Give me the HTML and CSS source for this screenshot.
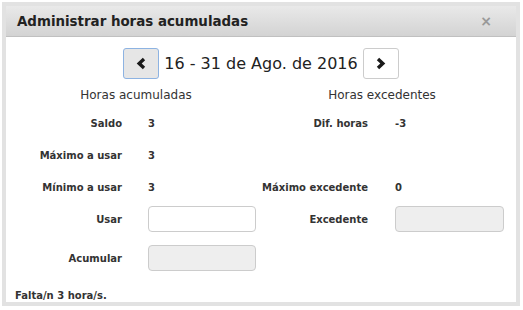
FILE: index.html
```html
<!DOCTYPE html>
<html>
<head>
	<title>Administrar horas acumuladas</title>
	<link rel="stylesheet" href="styles.css">
</head>
<body>
	<div class="modal">
		<div class="modal-header">
			<h3>Administrar horas acumuladas</h3>
			<span class="close">&times;</span>
		</div>

		<div class="modal-body">
			<div class="periodo">
				<button type="button" class="btn btn-active">
					<svg width="11" height="13" viewBox="0 0 11 13"><path d="M8 2 L3.2 6.5 L8 11" fill="none" stroke="#1a1a1a" stroke-width="3.4"/></svg>
				</button>
				<span class="fecha">16 - 31 de Ago. de 2016</span>
				<button type="button" class="btn">
					<svg width="11" height="13" viewBox="0 0 11 13"><path d="M3 2 L7.8 6.5 L3 11" fill="none" stroke="#1a1a1a" stroke-width="3.4"/></svg>
				</button>
			</div>

			<div class="titulos">
				<h4>Horas acumuladas</h4>
				<h4>Horas excedentes</h4>
			</div>

			<div class="fila">
				<label>Saldo</label>
				<span class="valor">3</span>
				<label>Dif. horas</label>
				<span class="valor valor-der">-3</span>
			</div>
			<div class="fila">
				<label>Máximo a usar</label>
				<span class="valor">3</span>
				<span></span>
				<span></span>
			</div>
			<div class="fila">
				<label>Mínimo a usar</label>
				<span class="valor">3</span>
				<label>Máximo excedente</label>
				<span class="valor valor-der">0</span>
			</div>
			<div class="fila fila-input">
				<label for="usar">Usar</label>
				<span class="valor"><input type="text" id="usar" class="campo"></span>
				<label for="excedente">Excedente</label>
				<span class="valor valor-der"><input type="text" id="excedente" class="campo campo-der" disabled></span>
			</div>
			<div class="fila fila-input fila-ultima">
				<label for="acumular">Acumular</label>
				<span class="valor"><input type="text" id="acumular" class="campo" disabled></span>
				<span></span>
				<span></span>
			</div>

			<p class="aviso">Falta/n 3 hora/s.</p>
		</div>
	</div>
</body>
</html>
```

FILE: styles.css
```css
body {
	font-family: "DejaVu Sans", Verdana, sans-serif;
	color: #333;
	margin: 0;
	padding: 2px;
	background: #fff;
}

.modal {
	width: 510px;
	height: 296px;
	border: 4px solid #e2e2e2;
	background: #fff;
	overflow: hidden;
}

.modal-header {
	height: 30px;
	display: flex;
	align-items: center;
	justify-content: space-between;
	padding: 0 24px 0 11px;
	background: linear-gradient(#e9e9e9, #d3d3d3);
	border-bottom: 1px solid #c0c0c0;
}

.modal-header h3 {
	margin: 0;
	font-size: 13.4px;
	font-weight: bold;
	color: #222;
}

.close {
	font-size: 14px;
	font-weight: bold;
	color: #999;
}

.periodo {
	display: flex;
	justify-content: center;
	align-items: center;
	gap: 5px;
	margin-top: 11px;
}

.btn {
	width: 36px;
	height: 31px;
	padding: 0;
	display: flex;
	align-items: center;
	justify-content: center;
	background: #fff;
	border: 1px solid #ccc;
	border-radius: 3px;
}

.btn-active {
	background: #e6e6e6;
	border-color: #8db3e2;
}

.fecha {
	font-size: 16px;
	color: #222;
}

.titulos {
	display: grid;
	grid-template-columns: 260px 232px;
	margin-top: 6px;
}

.titulos h4 {
	margin: 0;
	text-align: center;
	font-size: 12px;
	font-weight: normal;
	line-height: 20px;
}

.fila {
	display: grid;
	grid-template-columns: 116px 134px 112px 148px;
	height: 32px;
	align-items: center;
	font-size: 10px;
	font-weight: bold;
}

.titulos + .fila {
	margin-top: 2px;
}

.fila label {
	text-align: right;
	white-space: nowrap;
}

.valor {
	padding-left: 26px;
}

.valor-der {
	padding-left: 27px;
}

.fila-input {
	height: 26px;
	margin-top: 3px;
}

.fila-ultima {
	margin-top: 13px;
}

.campo {
	display: block;
	box-sizing: border-box;
	width: 108px;
	height: 26px;
	border: 1px solid #ccc;
	border-radius: 4px;
	background: #fff;
}

.campo:disabled {
	background: #eee;
}

.campo-der {
	width: 109px;
}

.aviso {
	margin: 19px 0 0 9px;
	font-size: 10px;
	font-weight: bold;
}
```
